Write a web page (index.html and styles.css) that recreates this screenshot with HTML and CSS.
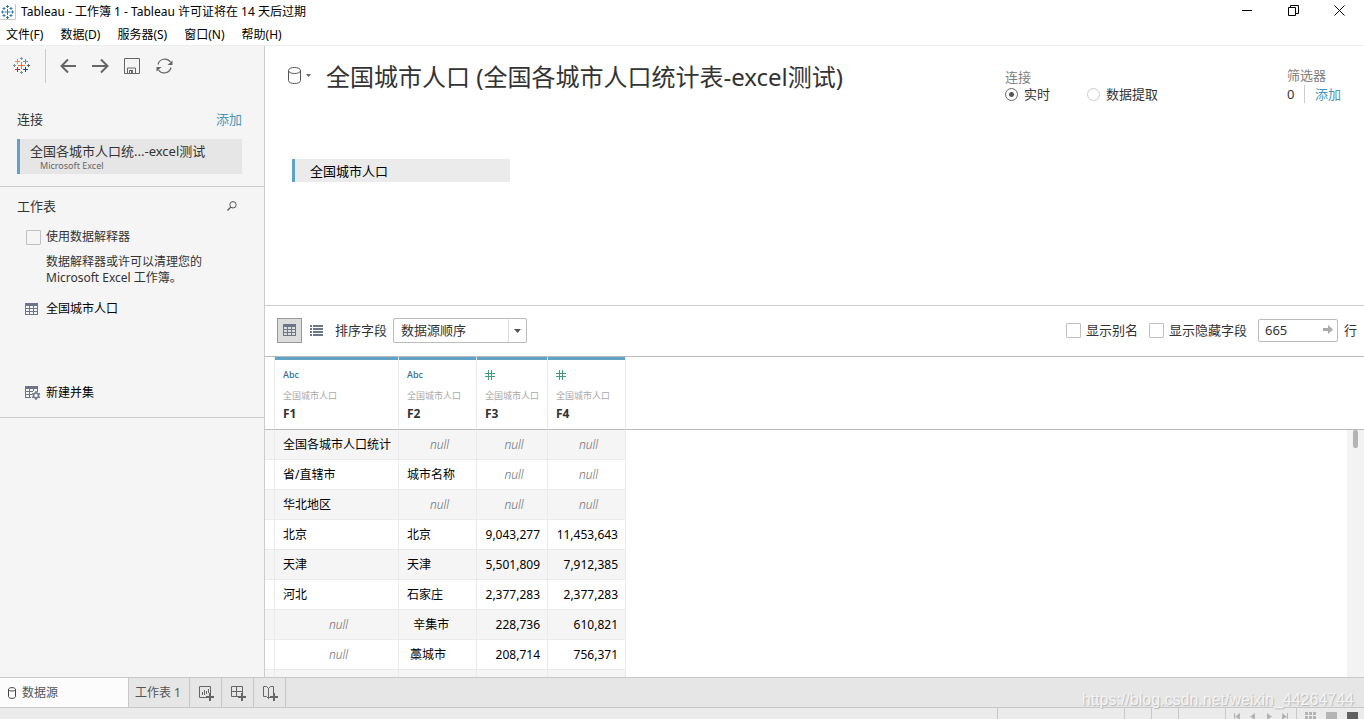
FILE: index.html
```html
<!DOCTYPE html>
<html lang="zh-CN">
<head>
<meta charset="utf-8">
<title>Tableau - 工作簿 1</title>
<link rel="stylesheet" href="styles.css">
</head>
<body>
<svg class="defs" aria-hidden="true">
  <symbol id="grid" viewBox="0 0 13 12"><path fill="#6b7788" fill-rule="evenodd" d="M0 0h13v12H0zM1 3v2h3V3zM5 3v2h3V3zM9 3v2h3V3zM1 6v2h3V6zM5 6v2h3V6zM9 6v2h3V6zM1 9v2h3V9zM5 9v2h3V9zM9 9v2h3V9z"/></symbol>
  <symbol id="hash" viewBox="0 0 10 10"><path d="M3.500 0v10M6.500 0v10M0 3.500h10M0 6.500h10" stroke="#3f9f80" fill="none"/></symbol>
</svg>

<header class="titlebar">
  <svg class="app-icon" width="16" height="16" viewBox="0 0 16 16" fill="none"><path stroke="#c8c8c8" d="M15.500 0v15.500H0"/><path stroke="#2f7ea8" d="M7.500 5v6M4.500 8h6M7.500 1v3M6 2.500h3M7.500 12v3M6 13.500h3M1 8h3M2.500 6.500v3M11 8h3M12.500 6.500v3M4 3v3M2.500 4.500h3M11 3v3M9.500 4.500h3M4 10v3M2.500 11.500h3M11 10v3M9.500 11.500h3"/></svg>
  <span class="window-title">Tableau - 工作簿 1 - Tableau 许可证将在 14 天后过期</span>
  <div class="window-buttons">
    <button aria-label="最小化"><svg width="11" height="11"><path d="M0 5.500h10" stroke="#000"/></svg></button>
    <button aria-label="还原"><svg width="11" height="11"><path d="M.5 2.500h7v8h-7zM2.500 2.500v-2h8v8h-3" stroke="#000" fill="none"/></svg></button>
    <button aria-label="关闭"><svg width="11" height="11"><path d="M.5.5l10 10M10.500.5l-10 10" stroke="#000"/></svg></button>
  </div>
</header>
<nav class="menubar">
  <button>文件(F)</button><button>数据(D)</button><button>服务器(S)</button><button>窗口(N)</button><button>帮助(H)</button>
</nav>

<div class="main">
  <aside class="sidebar">
    <div class="tools">
      <button class="logo" aria-label="开始页面"><svg width="18" height="18" viewBox="0 0 18 18" fill="none"><path stroke="#e8762d" d="M8.500 5v7M5 8.500h7"/><path stroke="#e8915a" d="M4.500 2v5M2 4.500h5"/><path stroke="#5f9aaa" d="M12.500 2v5M10 4.500h5"/><path stroke="#c72035" d="M4.500 10v5M2 12.500h5"/><path stroke="#1f447e" d="M12.500 10v5M10 12.500h5"/><path stroke="#7199a6" d="M8.500 0v3M7 1.500h3M1.500 7v3M0 8.500h3M8.500 14v3M7 15.500h3"/><path stroke="#59609a" d="M15.500 7v3M14 8.500h3"/></svg></button>
      <button aria-label="后退"><svg width="17" height="16" viewBox="0 0 17 16"><path d="M16 8H2M8 1.500L1.500 8 8 14.500" fill="none" stroke="#666" stroke-width="2"/></svg></button>
      <button aria-label="前进"><svg width="17" height="16" viewBox="0 0 17 16"><path d="M0 8h15M9 1.500L15.500 8 9 14.500" fill="none" stroke="#666" stroke-width="2"/></svg></button>
      <button aria-label="保存"><svg width="17" height="16" viewBox="0 0 17 16"><path d="M.5.5h15v15H.5zM3.500 15v-5h8v5" fill="none" stroke="#666"/><path d="M5 12h4v3H7v-2H6v2H5z" fill="#666"/></svg></button>
      <button aria-label="刷新"><svg width="18" height="16" viewBox="0 0 18 16"><path d="M2 6.500a7 7 0 0 1 12.500-2.500M15 9.500a7 7 0 0 1-12.500 2.500" fill="none" stroke="#666" stroke-width="1.200"/><path d="M16.500 2.500V7h-5zM.5 13.500V9h5z" fill="#666"/></svg></button>
    </div>
    <section class="connections">
      <div class="section-head"><h2>连接</h2><a href="#">添加</a></div>
      <button class="connection"><span>全国各城市人口统...-excel测试</span><small>Microsoft Excel</small></button>
    </section>
    <section class="sheets">
      <div class="section-head"><h2>工作表</h2><button class="search" aria-label="搜索"><svg width="10" height="10" viewBox="0 0 10 10"><circle cx="6" cy="3.800" r="3.200" fill="none" stroke="#555"/><path d="M3.700 6.200L.4 9.500" stroke="#555" stroke-width="1.300"/></svg></button></div>
      <label class="check interpreter"><input type="checkbox">使用数据解释器</label>
      <p>数据解释器或许可以清理您的 Microsoft Excel 工作簿。</p>
      <button class="sheet"><svg width="13" height="12"><use href="#grid"/></svg>全国城市人口</button>
      <button class="sheet union"><svg width="16" height="14" viewBox="0 0 16 14"><path fill="#6b7788" fill-rule="evenodd" d="M0 0h13v6h-1V3H9v2H8V3H5v2h3v1H5v2h2v1H5v2h1v1H0zM1 3v2h3V3zM1 6v2h3V6zM1 9v2h3V9z"/><circle cx="11" cy="9.500" r="2.500" fill="none" stroke="#6b7788" stroke-width="1.500"/><path d="M11 5v2M11 12v2M7 7.500l1.500.8M13.500 10.800l1.500.9M7 11.700l1.500-.9M13.500 8.300l1.500-.8" stroke="#6b7788" stroke-width="1.500"/></svg>新建并集</button>
    </section>
  </aside>

  <main class="content">
    <section class="canvas">
      <div class="source-head">
        <button class="source-menu" aria-label="数据源"><svg width="24" height="17" viewBox="0 0 24 17"><path d="M.5 3.500v10c0 4 12 4 12 0v-10c0-4-12-4-12 0c0 4 12 4 12 0" fill="none" stroke="#555"/><path d="M18 7h5l-2.500 3z" fill="#666"/></svg></button>
        <h1>全国城市人口 (全国各城市人口统计表-excel测试)</h1>
        <fieldset class="mode">
          <legend>连接</legend>
          <label><input type="radio" name="mode" checked>实时</label>
          <label><input type="radio" name="mode">数据提取</label>
        </fieldset>
        <div class="filters"><span>筛选器</span><div><b>0</b><a href="#">添加</a></div></div>
      </div>
      <button class="table-pill">全国城市人口</button>
    </section>

    <section class="gridbar">
      <button class="view on" aria-label="网格"><svg width="13" height="12"><use href="#grid"/></svg></button>
      <button class="view" aria-label="列表"><svg width="13" height="11" viewBox="0 0 13 11"><path d="M0 1h2M3 1h10M0 4h2M3 4h10M0 7h2M3 7h10M0 10h2M3 10h10" stroke="#6b7788" stroke-width="2"/></svg></button>
      <label class="sort-label" for="sort">排序字段</label>
      <div class="select"><select id="sort"><option>数据源顺序</option></select><svg width="18" height="23" viewBox="0 0 18 23"><path d="M.5 0v23" stroke="#ddd"/><path d="M6 10h7l-3.500 4z" fill="#555"/></svg></div>
      <div class="options">
        <label class="check"><input type="checkbox">显示别名</label>
        <label class="check"><input type="checkbox">显示隐藏字段</label>
        <div class="rows"><input id="rows" type="text" value="665"><svg width="10" height="9" viewBox="0 0 10 9"><path d="M0 3h5V0l5 4.500L5 9V6H0z" fill="#aaa"/></svg></div>
        <label for="rows">行</label>
      </div>
    </section>

    <section class="data">
      <table>
        <colgroup><col class="c0"><col class="c1"><col class="c2"><col class="c3"><col class="c4"></colgroup>
        <thead><tr>
          <td></td>
          <th><span class="type">Abc</span><small>全国城市人口</small>F1</th>
          <th><span class="type">Abc</span><small>全国城市人口</small>F2</th>
          <th><span class="type"><svg width="10" height="10"><use href="#hash"/></svg></span><small>全国城市人口</small>F3</th>
          <th><span class="type"><svg width="10" height="10"><use href="#hash"/></svg></span><small>全国城市人口</small>F4</th>
        </tr></thead>
        <tbody>
          <tr><td></td><td>全国各城市人口统计</td><td class="null">null</td><td class="null">null</td><td class="null">null</td></tr>
          <tr><td></td><td>省/直辖市</td><td>城市名称</td><td class="null">null</td><td class="null">null</td></tr>
          <tr><td></td><td>华北地区</td><td class="null">null</td><td class="null">null</td><td class="null">null</td></tr>
          <tr><td></td><td>北京</td><td>北京</td><td class="num">9,043,277</td><td class="num">11,453,643</td></tr>
          <tr><td></td><td>天津</td><td>天津</td><td class="num">5,501,809</td><td class="num">7,912,385</td></tr>
          <tr><td></td><td>河北</td><td>石家庄</td><td class="num">2,377,283</td><td class="num">2,377,283</td></tr>
          <tr><td></td><td class="null">null</td><td>  辛集市</td><td class="num">228,736</td><td class="num">610,821</td></tr>
          <tr><td></td><td class="null">null</td><td> 藁城市</td><td class="num">208,714</td><td class="num">756,371</td></tr>
          <tr><td></td><td></td><td></td><td></td><td></td></tr>
        </tbody>
      </table>
      <div class="scroll"><i></i></div>
    </section>
  </main>
</div>

<nav class="tabs">
  <button class="tab source"><svg width="8" height="12" viewBox="0 0 8 12"><path d="M.5 2.500v7c0 2.500 7 2.500 7 0v-7c0-2.500-7-2.500-7 0c0 2 7 2 7 0" fill="none" stroke="#444"/></svg>数据源</button>
  <button class="tab">工作表 1</button>
  <button class="tab new" aria-label="新建工作表"><svg width="16" height="16" viewBox="0 0 16 16" fill="none" stroke="#666"><path d="M7 11.500H.5V.5h11V7M3.500 6v3M5.500 4v5M7.500 5v3M9.500 3v4"/><path d="M11 7v8M7 11h8" stroke-width="2"/></svg></button>
  <button class="tab new" aria-label="新建仪表板"><svg width="16" height="16" viewBox="0 0 16 16" fill="none" stroke="#666"><path d="M7 10.500H.5V.5h11V7M5.500 0v11M0 5.500h12"/><path d="M11 7v8M7 11h8" stroke-width="2"/></svg></button>
  <button class="tab new" aria-label="新建故事"><svg width="16" height="16" viewBox="0 0 16 16" fill="none" stroke="#666"><path d="M5.500 2.500v10l-2-2h-3V.5h3l2 2 2-2h3V7M5.500 12.500l2-2"/><path d="M11 7v8M7 11h8" stroke-width="2"/></svg></button>
</nav>
<footer class="status">
  <span class="s1"></span><span class="s2"></span><span class="s2"></span><span class="s3"></span>
  <span class="s4"><svg width="54" height="12" viewBox="0 0 54 12" fill="#b4b4b4"><path d="M0 5h1v7H0zM6 5v7L1 8.500zM21 5v7l-5-3.500zM33 5v7l5-3.500zM48 5v7l5-3.500zM53 5h1v7h-1z"/></svg></span>
  <span class="s5"><svg width="54" height="12" viewBox="0 0 54 12"><path fill="#b4b4b4" d="M0 4h3v3H0zM4 4h3v3H4zM8 4h3v3H8zM0 8h3v3H0zM4 8h3v3H4zM8 8h3v3H8zM21 4h11v8H21z"/><path fill="#606060" d="M42 4h11v8H42z"/></svg></span>
</footer>
<div class="watermark">https://blog.csdn.net/weixin_44264744</div>
</body>
</html>
```
FILE: styles.css
```css
* { box-sizing: border-box; }
body {
  margin: 0;
  height: 100vh;
  display: flex;
  flex-direction: column;
  overflow: hidden;
  font: 12px/16px "Noto Sans", "Noto Sans CJK SC", sans-serif;
  color: #000;
  background: #fff;
}
button, input, select { font: inherit; color: inherit; }
button { margin: 0; padding: 0; border: 0; background: none; text-align: left; }
h1, h2, p { margin: 0; font-weight: 400; }
a { color: #4997b8; text-decoration: none; }
svg { display: block; flex: none; }
.defs { position: absolute; width: 0; height: 0; }

.titlebar { flex: none; display: flex; align-items: center; height: 23px; }
.app-icon { margin-right: 5px; }
.window-title { flex: 1; }
.window-buttons { display: flex; align-self: flex-start; }
.window-buttons button { width: 46px; height: 21px; display: flex; justify-content: center; align-items: center; }
.window-buttons { padding-right: 2px; }
.menubar { flex: none; display: flex; gap: 17px; height: 23px; padding: 1px 0 0 6px; border-bottom: 1px solid #ededed; }

.main { flex: 1; min-height: 0; display: flex; }
.sidebar { flex: none; width: 265px; background: #f5f5f5; border-right: 1px solid #ccc; }
.tools { display: flex; align-items: center; gap: 15px; height: 40px; }
.tools .logo { display: flex; align-items: center; width: 46px; height: 34px; padding-left: 13px; border-right: 1px solid #ccc; margin-right: -1px; }
.section-head { display: flex; justify-content: space-between; align-items: center; height: 20px; font-size: 13px; color: #333; }
.section-head h2 { font-size: 13px; }
.connections { height: 101px; padding: 23px 22px 0 17px; border-bottom: 1px solid #ccc; }
.connection {
  display: flex; flex-direction: column; width: 100%; height: 35px; margin-top: 10px; padding: 4px 0 0 10px;
  border-left: 3px solid #61a3c7; background: #e6e6e6; font-size: 13px; color: #333;
}
.connection small { padding-left: 10px; font-size: 9px; line-height: 14px; color: #666; }
.sheets { height: 231px; padding: 9px 22px 0 17px; border-bottom: 1px solid #ccc; color: #333; }
.search { padding-right: 5px; }
.check { display: flex; align-items: center; gap: 5px; }
.check input { appearance: none; width: 15px; height: 15px; margin: 0; border: 1px solid #c0c0c0; border-radius: 1px; background: transparent; }
.interpreter { margin: 13px 0 0 9px; }
.sheets p { width: 180px; margin: 9px 0 0 29px; }
.sheet { display: flex; align-items: center; gap: 8px; height: 20px; margin: 13px 0 0 8px; color: #000; }
.union { gap: 5px; margin-top: 64px; }

.content { flex: 1; min-width: 0; display: flex; flex-direction: column; }
.canvas { flex: none; height: 260px; border-bottom: 1px solid #ccc; }
.source-head { display: flex; height: 113px; padding: 15px 23px 0 23px; }
.source-menu { align-self: flex-start; padding-top: 6px; }
h1 { flex: 1; padding-left: 14px; font-size: 24px; line-height: 32px; color: #333; white-space: nowrap; }
.mode { display: flex; gap: 37px; margin: 0; padding: 0; border: 0; height: 50px; font-size: 13px; color: #333; }
.mode legend { padding: 8px 0 0; color: #808080; }
.mode label { display: flex; align-items: center; gap: 6px; height: 18px; }
.mode input { appearance: none; width: 13px; height: 13px; margin: 0; border: 1px solid #ccc; border-radius: 50%; }
.mode input:checked { border-color: #666; background: radial-gradient(circle, #555 2px, transparent 3px); }
.filters { margin-left: 129px; padding-top: 6px; font-size: 13px; color: #808080; }
.filters div { display: flex; line-height: 18px; padding-top: 2px; }
.filters b { width: 18px; margin-right: 10px; border-right: 1px solid #ccc; font-weight: 400; color: #333; }
.table-pill { display: block; width: 218px; height: 23px; margin-left: 27px; padding-left: 15px; border-left: 3px solid #61a3c7; background: #ebebeb; font-size: 13px; }

.gridbar { flex: none; display: flex; align-items: center; height: 51px; padding: 0 7px 2px 12px; border-bottom: 1px solid #bbb; font-size: 13px; color: #333; }
.view { display: grid; place-items: center; width: 25px; height: 25px; margin-right: 2px; }
.view.on { border: 1px solid #999; background: #dcdcdc; }
.sort-label { margin: 0 6px 0 4px; }
.select { position: relative; width: 134px; height: 25px; }
.select select { appearance: none; width: 100%; height: 100%; padding: 0 20px 0 7px; border: 1px solid #bbb; border-radius: 2px; background: #fff; }
.select svg { position: absolute; right: 1px; top: 1px; pointer-events: none; }
.options { display: flex; align-items: center; margin-left: auto; }
.options .check { margin-right: 11px; }
.rows { position: relative; width: 80px; height: 23px; margin-right: 6px; }
.rows input { width: 100%; height: 100%; padding: 0 0 0 6px; border: 1px solid #bbb; border-radius: 2px; }
.rows svg { position: absolute; right: 5px; top: 6px; }

.data { flex: 1; min-height: 0; display: flex; justify-content: space-between; align-items: flex-start; overflow: hidden; background: linear-gradient(#bbb, #bbb) 0 72px / 100% 1px no-repeat; }
table { flex: none; width: 361px; table-layout: fixed; border-collapse: separate; border-spacing: 0; }
.c0 { width: 10px; } .c1 { width: 124px; } .c2 { width: 78px; } .c3 { width: 71px; } .c4 { width: 78px; }
thead td, th { height: 73px; padding: 0; border-right: 1px solid #ebebeb; border-bottom: 1px solid #bbb; }
th { padding: 0 0 0 8px; text-align: left; color: #333; background: linear-gradient(#61a3c7, #61a3c7) 0 0 / 100% 3px no-repeat; background-clip: padding-box; white-space: nowrap; }
.type { display: flex; align-items: center; height: 22px; font-size: 9px; font-weight: 500; color: #35718f; }
th small { display: block; font-size: 9px; line-height: 20px; font-weight: 400; color: #aaa; }
tbody td { height: 30px; padding: 0 7px 0 8px; border-right: 1px solid #ebebeb; border-bottom: 1px solid #ebebeb; white-space: pre; }
tbody td:first-child { padding: 0; }
tbody tr:nth-child(odd) { background: #f5f5f5; }
tbody .null { padding: 0 4px 0 8px; text-align: center; font-style: italic; font-weight: 300; color: #6e6e6e; }
tbody .num { text-align: right; }
.scroll { align-self: stretch; width: 17px; margin-top: 73px; background: #f3f3f3; }
.scroll i { display: block; width: 5px; height: 18px; margin-left: 6px; border-radius: 2px; background: #b4b4b4; }

.tabs { flex: none; display: flex; height: 31px; border: solid #c8c8c8; border-width: 1px 0; background: #e6e6e6; color: #555; }
.tab { display: flex; align-items: center; padding: 0 8px 0 6px; border-right: 1px solid #c8c8c8; white-space: nowrap; }
.tab.source { width: 129px; gap: 6px; padding-left: 8px; background: #fcfcfc; }
.tab.new { width: 32px; padding: 2px 0 0 9px; }
.status { flex: none; display: flex; justify-content: flex-end; height: 11px; overflow: hidden; background: #ebebeb; }
.status span { flex: none; border-left: 1px solid #c8c8c8; }
.s1 { width: 127px; } .s2 { width: 27px; } .s3 { width: 47px; }
.s4 { width: 71px; padding-left: 8px; } .s5 { width: 68px; padding-left: 8px; }
.watermark { position: absolute; right: 10px; bottom: 10px; font: 16px/18px "Liberation Sans", sans-serif; color: #f4f4f4; text-shadow: 1px 1px 1px #b4b4b4; pointer-events: none; }
```
